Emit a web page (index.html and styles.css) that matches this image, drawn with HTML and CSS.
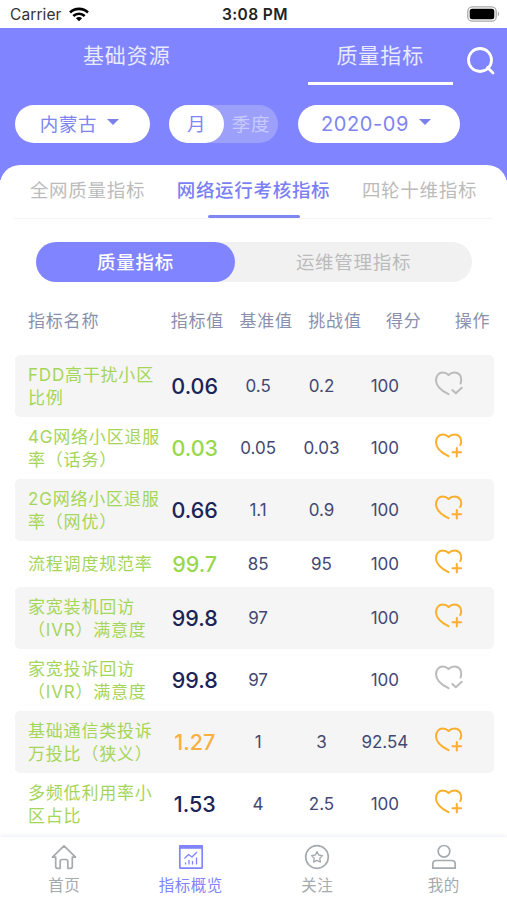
FILE: index.html
```
<!DOCTYPE html>
<html lang="zh-CN">
<head>
    <meta charset="UTF-8">
    <meta name="viewport" content="width=device-width, initial-scale=1.0">
    <title>质量指标</title>
    <link rel="stylesheet" href="styles.css">
</head>
<body>
    <!-- shared icons -->
    <svg class="sprite" width="0" height="0">
        <symbol id="heart-add" viewBox="0 0 30 26">
            <path d="M14.5 23.2C9 20.5 2 15.5 2 9.2C2 4.5 5 1.5 8.8 1.5C11 1.5 13 2.4 14.6 4C16.2 2.4 18.2 1.500 20.5 1.5C24.5 1.5 27.5 4.5 27.2 8.7C27.2 10 26.8 11 26.2 12"/>
            <path d="M22.800 15V23.600M18.500 19.300H27.100"/>
        </symbol>
        <symbol id="heart-done" viewBox="0 0 30 26">
            <path d="M14.5 23.2C9 20.5 2 15.5 2 9.2C2 4.5 5 1.5 8.8 1.5C11 1.5 13 2.4 14.6 4C16.2 2.4 18.2 1.5 20.5 1.5C24.5 1.5 27.5 4.5 27.2 8.7C27.2 10 27 11.3 26.5 12.5"/>
            <path d="M18.3 19L21.8 22.3L27.8 16.7"/>
        </symbol>
    </svg>

    <div class="status-bar">
        <span class="carrier">Carrier
            <svg width="20" height="15" viewBox="0 0 20 15" fill="none" stroke="#000" stroke-width="2.6">
                <path d="M1 5.5C6 .6 14 .6 19 5.5"/>
                <path d="M4.3 9C7.5 5.9 12.5 5.9 15.7 9"/>
                <path d="M10 14.3L6.9 11.2C8.6 9.6 11.4 9.6 13.1 11.2Z" fill="#000" stroke="none"/>
            </svg>
        </span>
        <span class="time">3:08 PM</span>
        <span class="battery">
            <svg width="33" height="16" viewBox="0 0 33 16">
                <rect x=".8" y=".8" width="28.4" height="14.4" rx="4.5" fill="#fff" stroke="#a9a9a9" stroke-width="1.3"/>
                <rect x="2.7" y="2.7" width="24.6" height="10.6" rx="2.5"/>
                <path d="M30.8 5.6C32.6 6.4 32.6 9.6 30.8 10.4Z" fill="#a9a9a9"/>
            </svg>
        </span>
    </div>

    <header class="header">
        <nav class="main-tabs">
            <a class="main-tab">基础资源</a>
            <a class="main-tab active">质量指标</a>
            <svg class="search" width="30" height="30" viewBox="0 0 30 30" fill="none" stroke="#fff" stroke-width="2.8" stroke-linecap="round">
                <circle cx="14" cy="14" r="11.5"/>
                <path d="M21.5 21.5L27 27"/>
            </svg>
        </nav>
        <div class="filters">
            <div class="select area">内蒙古<i class="caret"></i></div>
            <div class="period">
                <span class="on">月</span>
                <span class="off">季度</span>
            </div>
            <div class="select date">2020-09<i class="caret"></i></div>
        </div>
    </header>

    <main class="panel">
        <nav class="sub-tabs">
            <a class="sub-tab">全网质量指标</a>
            <a class="sub-tab active">网络运行考核指标</a>
            <a class="sub-tab">四轮十维指标</a>
        </nav>
        <div class="segment">
            <span class="segment-item active">质量指标</span>
            <span class="segment-item">运维管理指标</span>
        </div>

        <div class="table-head">
            <span>指标名称</span>
            <span>指标值</span>
            <span>基准值</span>
            <span>挑战值</span>
            <span>得分</span>
            <span>操作</span>
        </div>
        <div class="table">
            <div class="row">
                <span class="name">FDD高干扰小区<br>比例</span>
                <span class="value">0.06</span><span>0.5</span><span>0.2</span><span>100</span>
                <svg class="heart done"><use href="#heart-done"/></svg>
            </div>
            <div class="row">
                <span class="name">4G网络小区退服<br>率（话务）</span>
                <span class="value green">0.03</span><span>0.05</span><span>0.03</span><span>100</span>
                <svg class="heart"><use href="#heart-add"/></svg>
            </div>
            <div class="row">
                <span class="name">2G网络小区退服<br>率（网优）</span>
                <span class="value">0.66</span><span>1.1</span><span>0.9</span><span>100</span>
                <svg class="heart"><use href="#heart-add"/></svg>
            </div>
            <div class="row">
                <span class="name">流程调度规范率</span>
                <span class="value green">99.7</span><span>85</span><span>95</span><span>100</span>
                <svg class="heart"><use href="#heart-add"/></svg>
            </div>
            <div class="row">
                <span class="name">家宽装机回访<br>（IVR）满意度</span>
                <span class="value">99.8</span><span>97</span><span></span><span>100</span>
                <svg class="heart"><use href="#heart-add"/></svg>
            </div>
            <div class="row">
                <span class="name">家宽投诉回访<br>（IVR）满意度</span>
                <span class="value">99.8</span><span>97</span><span></span><span>100</span>
                <svg class="heart done"><use href="#heart-done"/></svg>
            </div>
            <div class="row">
                <span class="name">基础通信类投诉<br>万投比（狭义）</span>
                <span class="value orange">1.27</span><span>1</span><span>3</span><span>92.54</span>
                <svg class="heart"><use href="#heart-add"/></svg>
            </div>
            <div class="row">
                <span class="name">多频低利用率小<br>区占比</span>
                <span class="value">1.53</span><span>4</span><span>2.5</span><span>100</span>
                <svg class="heart"><use href="#heart-add"/></svg>
            </div>
        </div>
    </main>

    <footer class="tab-bar">
        <a class="tab-item">
            <svg width="26" height="26" viewBox="0 0 26 26">
                <path d="M1.5 13.2L13 1.8L24.5 13.2H21.3V22.5Q21.3 24.3 19.5 24.3H16.8V17.3Q16.8 15.5 15 15.5H11Q9.2 15.5 9.2 17.3V24.3H6.5Q4.7 24.3 4.7 22.5V13.2Z"/>
            </svg>
            首页
        </a>
        <a class="tab-item active">
            <svg width="26" height="26" viewBox="0 0 26 26">
                <rect x="1.8" y="1.8" width="22.4" height="22.4" rx="1"/>
                <path d="M1 3H25" stroke-width="3.6"/>
                <path d="M6.5 14.5L10.5 10.5L14 13L19 8" stroke-width="1.3"/>
                <path d="M7.5 20.5V18.5M11 20.5V16M14.5 20.5V17M18.5 20.5V13.5" stroke-width="1.3"/>
            </svg>
            指标概览
        </a>
        <a class="tab-item">
            <svg width="26" height="26" viewBox="0 0 26 26">
                <circle cx="13" cy="13" r="11.3"/>
                <path d="M13 7.6L14.7 11L18.5 11.6L15.8 14.3L16.4 18.1L13 16.4L9.6 18.1L10.2 14.3L7.5 11.6L11.3 11Z" stroke-width="1.3"/>
            </svg>
            关注
        </a>
        <a class="tab-item">
            <svg width="26" height="26" viewBox="0 0 26 26">
                <circle cx="13" cy="7.3" r="5.8"/>
                <path d="M1.8 24.2V20Q1.8 16.5 5.3 16.5H20.7Q24.2 16.5 24.2 20V24.2Z"/>
            </svg>
            我的
        </a>
    </footer>
</body>
</html>
```
FILE: styles.css
```
* {
    box-sizing: border-box;
}

body {
    margin: 0;
    height: 900px;
    overflow: hidden;
    display: flex;
    flex-direction: column;
    background-color: #fff;
    font-family: Inter, "Noto Sans CJK SC", sans-serif;
}

.sprite {
    position: absolute;
}

/* status bar */
.status-bar {
    height: 29px;
    margin-bottom: -1px;
    flex-shrink: 0;
    display: grid;
    grid-template-columns: 1fr auto 1fr;
    align-items: center;
    padding: 0 7px 0 10px;
    font-size: 15.5px;
    color: #333;
}

.carrier {
    display: flex;
    align-items: center;
    gap: 7px;
    letter-spacing: 0.1px;
}

.time {
    font-weight: 600;
    letter-spacing: 0.4px;
    color: #222;
}

.battery {
    display: flex;
    justify-content: flex-end;
}

.battery svg {
    margin-top: -1px;
}

/* header */
.header {
    height: 152px;
    flex-shrink: 0;
    background-color: #8085ff;
    color: #fff;
}

.main-tabs {
    position: relative;
    display: flex;
    height: 57px;
}

.main-tab {
    flex: 1;
    display: flex;
    flex-direction: column;
    align-items: center;
    line-height: 56px;
    font-size: 21px;
    letter-spacing: 0.9px;
    color: #e9eaff;
}

.main-tab.active::after {
    content: "";
    width: 145px;
    height: 3px;
    margin-top: -2px;
    background-color: #fff;
}

.search {
    position: absolute;
    right: 11px;
    top: 18px;
}

.filters {
    display: flex;
    margin-top: 20px;
    padding-left: 15px;
    line-height: 38px;
    font-size: 18.5px;
    letter-spacing: 0.7px;
}

.select {
    display: flex;
    align-items: center;
    justify-content: center;
    height: 38px;
    padding-right: 6px;
    border-radius: 19px;
    background-color: #fff;
    color: #8085ee;
}

.area {
    width: 135px;
}

.date {
    width: 162px;
    font-size: 20px;
    letter-spacing: 0.6px;
}

.caret {
    margin: -4px 0 0 10px;
    border: 6px solid transparent;
    border-top: 6px solid #7b7fe8;
    border-bottom: 0;
}

.period {
    display: flex;
    width: 109px;
    height: 38px;
    margin: 0 20px 0 19px;
    border-radius: 19px;
    background-color: #9ca0fb;
}

.period .on {
    width: 55px;
    border-radius: 19px;
    background-color: #fff;
    color: #8085ff;
    text-align: center;
}

.period .off {
    flex: 1;
    text-align: center;
    color: #c8cafd;
}

/* content panel */
.panel {
    flex: 1;
    min-height: 0;
    margin-top: -15px;
    border-radius: 20px 20px 0 0;
    background-color: #fff;
}

.sub-tabs {
    display: grid;
    grid-template-columns: 146px 186px 146px;
    justify-content: center;
    height: 54px;
    margin: 0 14px;
    border-bottom: 1px solid #f5f5f5;
    line-height: 50px;
    font-size: 18.5px;
    letter-spacing: 0.7px;
    text-align: center;
    white-space: nowrap;
    color: #bbb;
}

.sub-tab.active {
    display: flex;
    flex-direction: column;
    align-items: center;
    font-weight: 500;
    color: #7b7ff5;
}

.sub-tab.active::after {
    content: "";
    width: 92px;
    height: 3px;
    border-radius: 2px;
    background-color: #8085f0;
}

.segment {
    display: flex;
    width: 436px;
    height: 40px;
    margin: 23px 0 0 36px;
    border-radius: 20px;
    background-color: #f1f1f1;
    line-height: 40px;
    font-size: 18.5px;
    letter-spacing: 0.7px;
    text-align: center;
    color: #bbb;
}

.segment-item {
    flex: 1;
}

.segment-item.active {
    flex: none;
    width: 199px;
    border-radius: 20px;
    background-color: #8085ff;
    font-weight: 500;
    color: #fff;
}

/* table */
.table-head {
    display: grid;
    grid-template-columns: 135px repeat(5, 68.8px);
    margin-top: 25px;
    padding-left: 28px;
    height: 48px;
    line-height: 28px;
    font-size: 17px;
    letter-spacing: 0.8px;
    color: #8a90ab;
    text-align: center;
}

.table-head span:first-child {
    text-align: left;
}

.row {
    display: grid;
    grid-template-columns: 135px repeat(5, 63.4px);
    align-items: center;
    height: 62px;
    margin: 0 13px 0 15px;
    padding-left: 13px;
    border-radius: 5px;
    font-size: 17px;
    text-align: center;
    color: #434873;
}

.row:nth-child(odd) {
    background-color: #f5f5f5;
}

/* the only one-line name */
.row:nth-child(4) {
    height: 46px;
}

.name {
    padding-top: 1px;
    line-height: 23px;
    letter-spacing: 0.8px;
    text-align: left;
    white-space: nowrap;
    color: #a5d55a;
}

.value {
    font-size: 21.5px;
    line-height: 26px;
    font-weight: 500;
    color: #1b2458;
}

.green {
    color: #97d94b;
}

.orange {
    color: #f8b040;
}

.heart {
    justify-self: center;
    width: 30px;
    height: 26px;
    margin: -4px 0 0 1px;
    fill: none;
    stroke: #fbaf2c;
    stroke-width: 2;
    stroke-linecap: round;
    stroke-linejoin: round;
}

.heart.done {
    stroke: #bbb;
}

/* bottom tabs */
.tab-bar {
    display: grid;
    grid-template-columns: repeat(4, 1fr);
    height: 63px;
    flex-shrink: 0;
    padding-top: 7px;
    padding-left: 1px;
    background-color: #fff;
    box-shadow: 0 -1px 4px rgba(100, 120, 170, 0.14);
    z-index: 1;
}

.tab-item {
    display: flex;
    flex-direction: column;
    align-items: center;
    font-size: 15.5px;
    line-height: 31px;
    letter-spacing: 0.5px;
    color: #a5aaad;
}

.tab-item svg {
    flex-shrink: 0;
    fill: none;
    stroke: currentColor;
    stroke-width: 1.7;
    stroke-linejoin: round;
}

.tab-item.active {
    color: #8085ff;
}
```
